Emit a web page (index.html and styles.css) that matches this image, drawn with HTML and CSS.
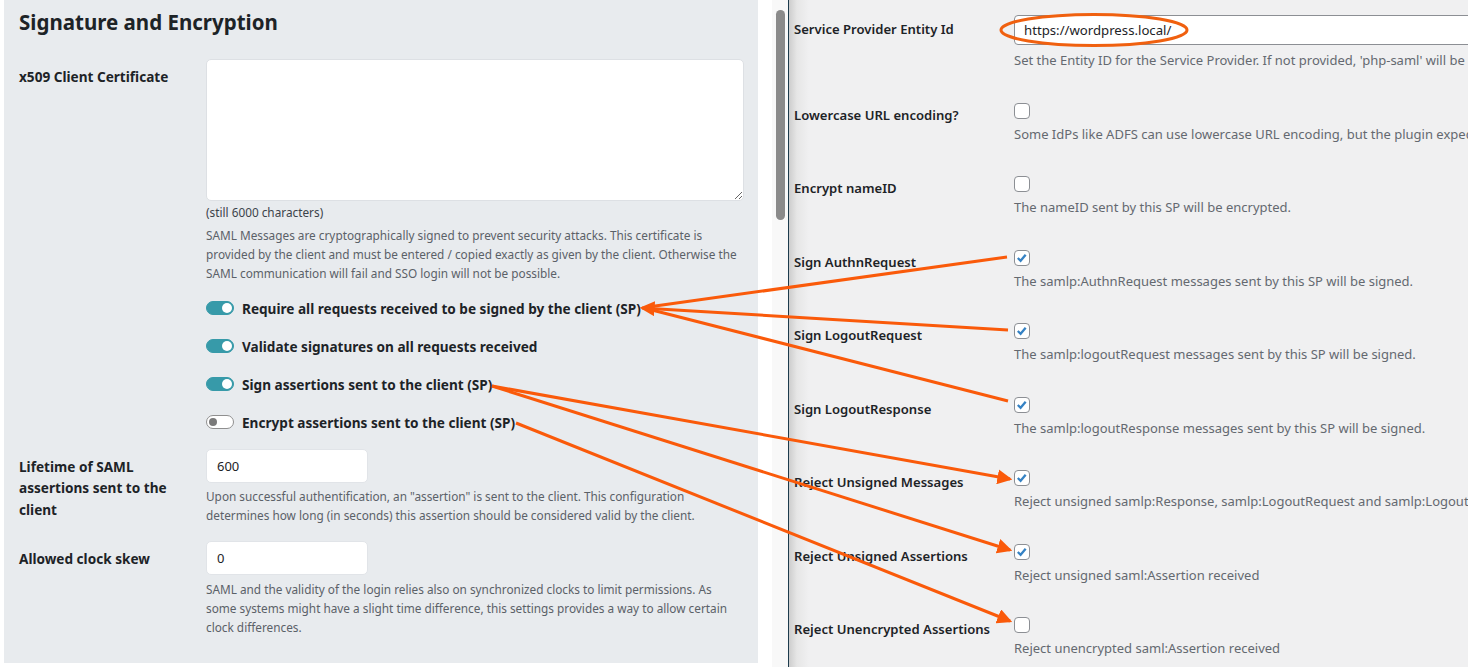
FILE: index.html
```html
<!DOCTYPE html>
<html lang="en">
<head>
    <meta charset="UTF-8">
    <meta name="viewport" content="width=device-width, initial-scale=1.0">
    <title>Signature and Encryption</title>
    <link rel="stylesheet" href="styles.css">
</head>
<body>
    <div class="screen">
        <!-- Left: plugin settings panel -->
        <section class="panel-left">
            <h2 class="panel-title">Signature and Encryption</h2>

            <div class="field-row field-row-cert">
                <label class="field-label" for="client_cert">x509 Client Certificate</label>
                <div class="field-body">
                    <textarea id="client_cert" class="cert-input"></textarea>
                    <div class="char-counter">(still 6000 characters)</div>
                    <p class="field-help">SAML Messages are cryptographically signed to prevent security attacks. This certificate is provided by the client and must be entered / copied exactly as given by the client. Otherwise the SAML communication will fail and SSO login will not be possible.</p>

                    <div class="toggle-list">
                        <div class="toggle-row">
                            <span class="toggle on"></span>
                            <span class="toggle-text">Require all requests received to be signed by the client (SP)</span>
                        </div>
                        <div class="toggle-row">
                            <span class="toggle on"></span>
                            <span class="toggle-text">Validate signatures on all requests received</span>
                        </div>
                        <div class="toggle-row">
                            <span class="toggle on"></span>
                            <span class="toggle-text">Sign assertions sent to the client (SP)</span>
                        </div>
                        <div class="toggle-row">
                            <span class="toggle"></span>
                            <span class="toggle-text">Encrypt assertions sent to the client (SP)</span>
                        </div>
                    </div>
                </div>
            </div>

            <div class="field-row field-row-lifetime">
                <label class="field-label" for="assertion_lifetime">Lifetime of SAML assertions sent to the client</label>
                <div class="field-body">
                    <input type="text" id="assertion_lifetime" class="small-input" value="600">
                    <p class="field-help">Upon successful authentification, an "assertion" is sent to the client. This configuration determines how long (in seconds) this assertion should be considered valid by the client.</p>
                </div>
            </div>

            <div class="field-row field-row-skew">
                <label class="field-label" for="clock_skew">Allowed clock skew</label>
                <div class="field-body">
                    <input type="text" id="clock_skew" class="small-input" value="0">
                    <p class="field-help">SAML and the validity of the login relies also on synchronized clocks to limit permissions. As some systems might have a slight time difference, this settings provides a way to allow certain clock differences.</p>
                </div>
            </div>
        </section>

        <!-- Scroll track between the two shots -->
        <div class="scroll-gap">
            <div class="scroll-track">
                <div class="scroll-thumb"></div>
            </div>
        </div>

        <!-- Right: WordPress SAML options -->
        <section class="panel-right">
            <div class="wp-row wp-row-first">
                <div class="wp-th">Service Provider Entity Id</div>
                <div class="wp-td">
                    <input type="text" class="regular-text" value="https://wordpress.local/">
                    <p class="description">Set the Entity ID for the Service Provider. If not provided, 'php-saml' will be used.</p>
                </div>
            </div>
            <div class="wp-row">
                <div class="wp-th">Lowercase URL encoding?</div>
                <div class="wp-td">
                    <span class="wp-check"></span>
                    <p class="description">Some IdPs like ADFS can use lowercase URL encoding, but the plugin expects uppercase URL encoding.</p>
                </div>
            </div>
            <div class="wp-row">
                <div class="wp-th">Encrypt nameID</div>
                <div class="wp-td">
                    <span class="wp-check"></span>
                    <p class="description">The nameID sent by this SP will be encrypted.</p>
                </div>
            </div>
            <div class="wp-row">
                <div class="wp-th">Sign AuthnRequest</div>
                <div class="wp-td">
                    <span class="wp-check"><svg viewBox="0 0 16 16"><path d="M3.2 8l3.2 3.2 5.8-7"/></svg></span>
                    <p class="description">The samlp:AuthnRequest messages sent by this SP will be signed.</p>
                </div>
            </div>
            <div class="wp-row">
                <div class="wp-th">Sign LogoutRequest</div>
                <div class="wp-td">
                    <span class="wp-check"><svg viewBox="0 0 16 16"><path d="M3.2 8l3.2 3.2 5.8-7"/></svg></span>
                    <p class="description">The samlp:logoutRequest messages sent by this SP will be signed.</p>
                </div>
            </div>
            <div class="wp-row">
                <div class="wp-th">Sign LogoutResponse</div>
                <div class="wp-td">
                    <span class="wp-check"><svg viewBox="0 0 16 16"><path d="M3.2 8l3.2 3.2 5.8-7"/></svg></span>
                    <p class="description">The samlp:logoutResponse messages sent by this SP will be signed.</p>
                </div>
            </div>
            <div class="wp-row">
                <div class="wp-th">Reject Unsigned Messages</div>
                <div class="wp-td">
                    <span class="wp-check"><svg viewBox="0 0 16 16"><path d="M3.2 8l3.2 3.2 5.8-7"/></svg></span>
                    <p class="description">Reject unsigned samlp:Response, samlp:LogoutRequest and samlp:LogoutResponse received</p>
                </div>
            </div>
            <div class="wp-row">
                <div class="wp-th">Reject Unsigned Assertions</div>
                <div class="wp-td">
                    <span class="wp-check"><svg viewBox="0 0 16 16"><path d="M3.2 8l3.2 3.2 5.8-7"/></svg></span>
                    <p class="description">Reject unsigned saml:Assertion received</p>
                </div>
            </div>
            <div class="wp-row">
                <div class="wp-th">Reject Unencrypted Assertions</div>
                <div class="wp-td">
                    <span class="wp-check"></span>
                    <p class="description">Reject unencrypted saml:Assertion received</p>
                </div>
            </div>
        </section>

        <!-- Annotation layer: arrows and circle drawn over both shots -->
        <svg class="annotations" width="1468" height="667" viewBox="0 0 1468 667">
            <defs>
                <marker id="arrow-head" markerWidth="5" markerHeight="5" refX="4.2" refY="2.5" orient="auto">
                    <path d="M0,0 L5,2.5 L0,5 z" fill="#fa5a0a"/>
                </marker>
            </defs>
            <ellipse cx="1094" cy="30" rx="93" ry="15.5" fill="none" stroke="#f0600f" stroke-width="3"/>
            <g stroke="#fa5a0a" stroke-width="3" fill="none">
                <line x1="1007" y1="257" x2="648" y2="307"/>
                <line x1="1008" y1="401" x2="648" y2="309"/>
                <line x1="1008" y1="330" x2="642" y2="308" marker-end="url(#arrow-head)"/>
                <line x1="492" y1="386" x2="1010" y2="479" marker-end="url(#arrow-head)"/>
                <line x1="492" y1="386" x2="1010" y2="550" marker-end="url(#arrow-head)"/>
                <line x1="516" y1="423" x2="1010" y2="621" marker-end="url(#arrow-head)"/>
            </g>
        </svg>
    </div>
</body>
</html>
```

FILE: styles.css
```css
html, body {
    margin: 0;
    padding: 0;
}
body {
    background-color: #ffffff;
    width: 1468px;
    height: 667px;
    overflow: hidden;
}
.screen {
    position: relative;
    display: flex;
    height: 667px;
}

/* Left panel */
.panel-left {
    box-sizing: border-box;
    width: 754px;
    height: 663px;
    margin-left: 4px;
    padding: 8px 14px 0 15px;
    background-color: #e8ebee;
    font-family: "Noto Sans", "Open Sans", sans-serif;
    color: #1d2327;
}
.panel-title {
    margin: 0;
    font-size: 20.5px;
    line-height: 28px;
    font-weight: 700;
    color: #1d2327;
}
.field-row {
    display: flex;
}
.field-row-cert {
    margin-top: 23px;
}
.field-row-lifetime {
    margin-top: 8px;
}
.field-row-skew {
    margin-top: 16.5px;
}
.field-label {
    box-sizing: border-box;
    flex: 0 0 187px;
    padding: 6.5px 22px 0 0;
    font-size: 13.6px;
    line-height: 21.5px;
    font-weight: 700;
}
.field-body {
    flex: 1;
    min-width: 0;
}
.cert-input {
    display: block;
    box-sizing: border-box;
    width: 100%;
    height: 142px;
    margin: 0;
    border: 1px solid #dde0e4;
    border-radius: 5px;
    background: #ffffff;
}
.char-counter {
    margin-top: 2px;
    font-size: 11.8px;
    line-height: 18px;
    color: #3c434a;
}
.field-help {
    margin: 4.5px 0 0;
    font-size: 11.8px;
    line-height: 19px;
    color: #5b6168;
}
.field-row-lifetime .field-help {
    margin-top: 3.5px;
}
.small-input {
    display: block;
    box-sizing: border-box;
    width: 162px;
    height: 34px;
    margin: 0;
    padding: 0 10px;
    border: 1px solid #e1e4e8;
    border-radius: 5px;
    background: #ffffff;
    font-family: "Noto Sans", sans-serif;
    font-size: 13px;
    color: #1d2327;
}

/* Toggles */
.toggle-list {
    margin-top: 6.5px;
}
.toggle-row {
    display: flex;
    align-items: center;
    gap: 8px;
    height: 38px;
}
.toggle {
    position: relative;
    box-sizing: border-box;
    width: 28px;
    height: 14px;
    border-radius: 7px;
    border: 1px solid #8f8f8f;
    background: #ffffff;
}
.toggle::after {
    content: "";
    position: absolute;
    top: 2px;
    left: 2px;
    width: 8px;
    height: 8px;
    border-radius: 50%;
    background: #7a7a7a;
}
.toggle.on {
    border-color: #379aa9;
    background: #379aa9;
}
.toggle.on::after {
    left: auto;
    right: 1px;
    top: 1px;
    width: 10px;
    height: 10px;
    background: #ffffff;
}
.toggle-text {
    font-size: 13.6px;
    font-weight: 700;
    color: #1d2327;
}

/* Scroll area between shots */
.scroll-gap {
    display: flex;
    justify-content: flex-end;
    width: 30px;
    background: #ffffff;
}
.scroll-track {
    width: 16px;
    padding-top: 10px;
    background: #f8f8f8;
}
.scroll-thumb {
    width: 9px;
    height: 210px;
    margin-left: 4px;
    border-radius: 5px;
    background: #8a8a8a;
}

/* Right panel */
.panel-right {
    flex: 1;
    min-width: 0;
    overflow: hidden;
    border-left: 1px solid #1d3b4c;
    background: linear-gradient(90deg, #cdcdcd 0, #e6e6e6 8px, #f0f0f1 20px);
    font-family: "Noto Sans", "Open Sans", sans-serif;
    color: #1d2327;
}
.wp-row {
    display: flex;
    align-items: flex-start;
    padding: 15px 0 17.5px;
}
.wp-th {
    box-sizing: border-box;
    flex: 0 0 225px;
    padding: 3px 10px 0 5px;
    font-size: 13.1px;
    line-height: 18px;
    font-weight: 600;
}
.wp-row-first .wp-th {
    padding-top: 5px;
}
.wp-td {
    flex: 1;
    min-width: 0;
}
.regular-text {
    display: block;
    box-sizing: border-box;
    width: 600px;
    height: 30px;
    margin: 0;
    padding: 0 9px;
    border: 1px solid #8c8f94;
    border-radius: 4px;
    background: #ffffff;
    font-family: "Noto Sans", sans-serif;
    font-size: 13.2px;
    color: #1d2327;
}
.wp-check {
    display: block;
    box-sizing: border-box;
    width: 16px;
    height: 16px;
    border: 1px solid #8c8f94;
    border-radius: 4px;
    background: #ffffff;
}
.wp-check svg {
    display: block;
    width: 14px;
    height: 14px;
    fill: none;
    stroke: #3582c4;
    stroke-width: 2.6;
}
.description {
    margin: 5px 0 0;
    font-size: 13px;
    line-height: 20px;
    color: #646970;
    white-space: nowrap;
}

/* Annotation overlay */
.annotations {
    position: absolute;
    top: 0;
    left: 0;
    pointer-events: none;
}
```
